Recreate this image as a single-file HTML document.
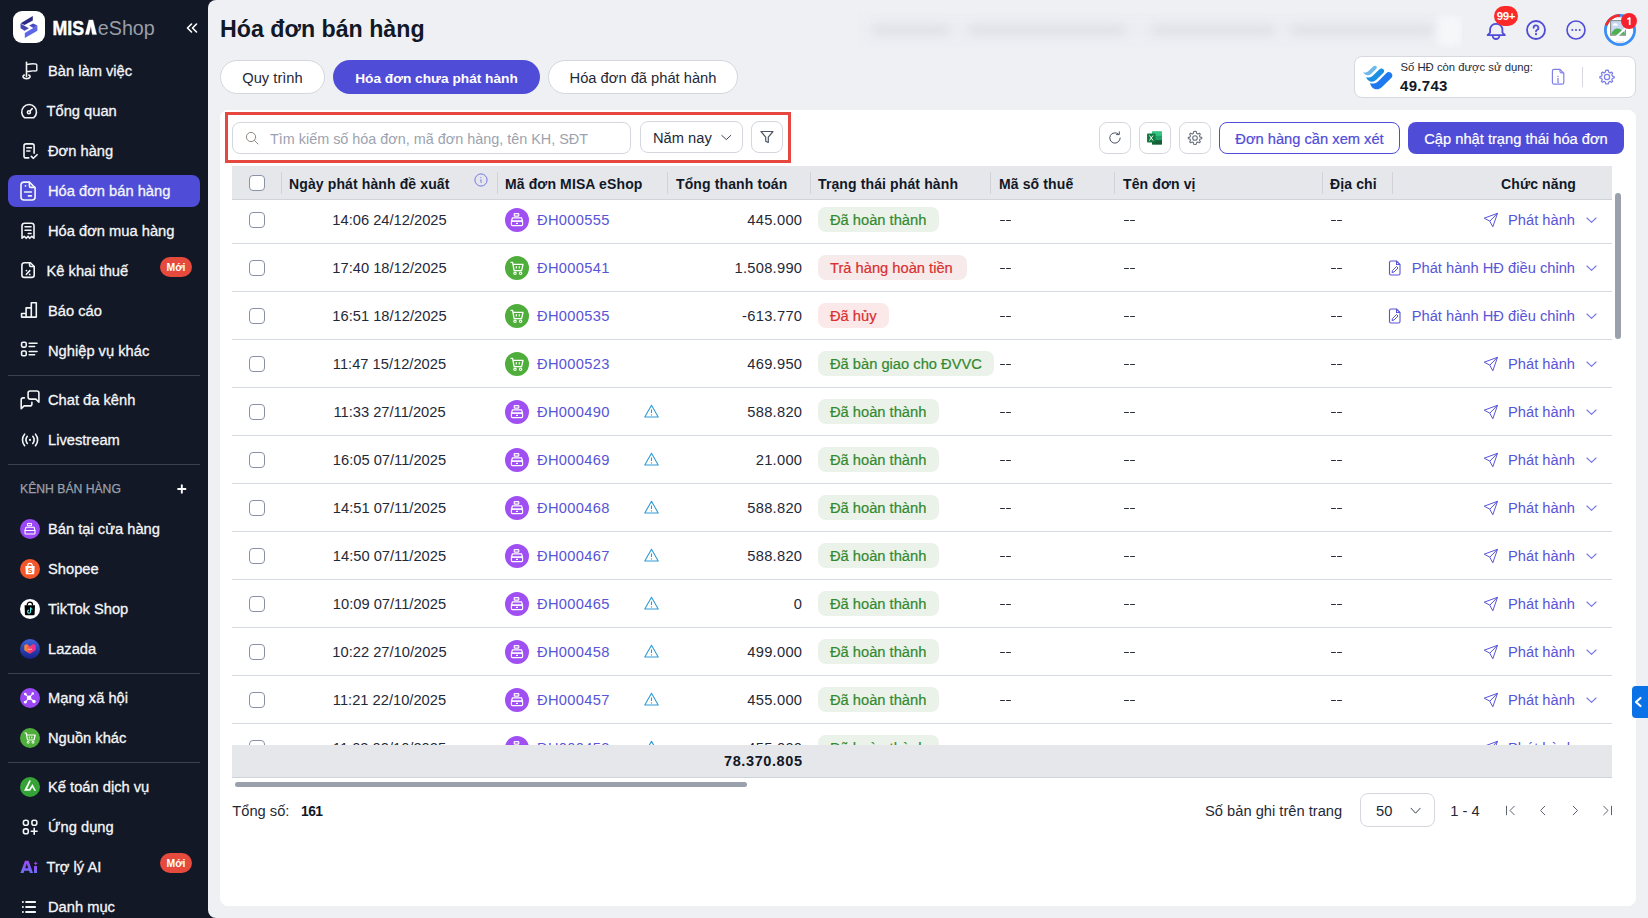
<!DOCTYPE html><html><head><meta charset="utf-8"><style>
*{box-sizing:border-box}
html,body{margin:0;padding:0;width:1648px;height:918px;overflow:hidden;background:#121826;font-family:"Liberation Sans", sans-serif;}
</style></head><body>
<div style="position:absolute;left:13px;top:11px;width:32px;height:32px;background:#fff;border-radius:9px"></div>
<svg style="position:absolute;left:13px;top:11px;" width="32" height="32" viewBox="0 0 32 32" fill="none"><path d="M7.7 12.2 L19.8 5 L19.8 9.4 L11.5 14 Z" fill="#2b2b85"/><path d="M7.5 12.6 L15.8 17.3 L11.6 19.7 L7.5 17.2 Z" fill="#4545b2"/><path d="M16.2 14.4 L20.2 12.5 L24.4 14.6 L20.3 17 Z" fill="#4a4ac2"/><path d="M11.8 22 L24.4 14.6 L24.4 19.8 L11.8 27 Z" fill="#5d66e8"/></svg>
<svg style="position:absolute;left:52px;top:12px;" width="110" height="30" viewBox="0 0 110 30" fill="none"><text x="0.6" y="22.6" font-family="Liberation Sans" font-weight="700" font-size="20.5" fill="#fff" stroke="#fff" stroke-width="0.5" textLength="31.5" lengthAdjust="spacingAndGlyphs">MIS</text><path d="M33.2 22.6 L36.9 7.9 H41 L44.6 22.6 H40.4 L39.9 20.4 L38.9 14 L36.9 22.6 Z" fill="#fff" stroke="#fff" stroke-width="0.3"/><text x="45.8" y="22.6" font-family="Liberation Sans" font-size="20.5" fill="#9a9ea8" textLength="57" lengthAdjust="spacingAndGlyphs">eShop</text></svg>
<svg style="position:absolute;left:186px;top:23px;" width="12" height="10" viewBox="0 0 12 10" fill="none"><path d="M5.5 1 L1.5 5 L5.5 9 M10.5 1 L6.5 5 L10.5 9" stroke="#fff" stroke-width="1.6" stroke-linecap="round" stroke-linejoin="round"/></svg>
<div style="position:absolute;left:8px;top:175px;width:192px;height:32px;background:#4f4cd8;border-radius:8px"></div>
<div style="position:absolute;left:8px;top:375px;width:192px;height:1px;background:#3a4150"></div>
<div style="position:absolute;left:8px;top:464px;width:192px;height:1px;background:#3a4150"></div>
<div style="position:absolute;left:8px;top:673px;width:192px;height:1px;background:#3a4150"></div>
<div style="position:absolute;left:8px;top:762px;width:192px;height:1px;background:#3a4150"></div>
<svg style="position:absolute;left:16px;top:60px;" width="26" height="22" viewBox="0 0 26 22" fill="none"><path d="M10.5 2.4 V16.6" stroke="#f4f5f7" stroke-width="1.6" stroke-linecap="round" stroke-linejoin="round"/><path d="M10.5 4.4 C13 4.6 15 3.6 17.5 3.7 C19.2 3.7 20.8 3.9 20.8 5 V10.2 C20.8 11 19.5 11 17.5 10.9 C15 10.8 13 11.7 10.5 11.5" stroke="#f4f5f7" stroke-width="1.4" stroke-linejoin="round"/><path d="M8.3 15 C6.2 15.8 6.6 18.7 10.55 18.7 C14.5 18.7 14.9 15.8 12.8 15" stroke="#f4f5f7" stroke-width="1.6" stroke-linecap="round" stroke-linejoin="round"/></svg>
<div style="position:absolute;left:48px;top:61.0px;line-height:20px;font-size:14.7px;color:#f4f5f7;font-weight:400;white-space:nowrap;-webkit-text-stroke:0.3px #f4f5f7">Bàn làm việc</div>
<svg style="position:absolute;left:16px;top:100px;" width="26" height="22" viewBox="0 0 26 22" fill="none"><path d="M8.6 17.8 A7.4 7.4 0 1 1 17.6 17.8 Z" stroke="#f4f5f7" stroke-width="1.6" stroke-linecap="round" stroke-linejoin="round"/><circle cx="12.9" cy="12.2" r="1.5" stroke="#f4f5f7" stroke-width="1.6" stroke-linecap="round" stroke-linejoin="round"/><path d="M14.3 10.7 L16.2 8.6" stroke="#f4f5f7" stroke-width="1.6" stroke-linecap="round" stroke-linejoin="round"/></svg>
<div style="position:absolute;left:46.5px;top:101.0px;line-height:20px;font-size:14.7px;color:#f4f5f7;font-weight:400;white-space:nowrap;-webkit-text-stroke:0.3px #f4f5f7">Tổng quan</div>
<svg style="position:absolute;left:16px;top:140px;" width="26" height="22" viewBox="0 0 26 22" fill="none"><path d="M12.7 17.9 H10 A2 2 0 0 1 8 15.9 V5.9 A2 2 0 0 1 10 3.9 H16.1 A2 2 0 0 1 18.1 5.9 V13.2" stroke="#f4f5f7" stroke-width="1.6" stroke-linecap="round" stroke-linejoin="round"/><path d="M10.8 7.7 H15.4 M10.8 11 H13.9" stroke="#f4f5f7" stroke-width="1.6" stroke-linecap="round" stroke-linejoin="round"/><path d="M15.3 16.3 L17.4 18.3 L21.1 14.7" stroke="#f4f5f7" stroke-width="1.6" stroke-linecap="round" stroke-linejoin="round"/></svg>
<div style="position:absolute;left:48px;top:141.0px;line-height:20px;font-size:14.7px;color:#f4f5f7;font-weight:400;white-space:nowrap;-webkit-text-stroke:0.3px #f4f5f7">Đơn hàng</div>
<svg style="position:absolute;left:16px;top:180px;" width="26" height="22" viewBox="0 0 26 22" fill="none"><path d="M13.4 2.1 H8 A3 3 0 0 0 5 5.1 V17 A3 3 0 0 0 8 20 H16.1 A3 3 0 0 0 19.1 17 V7.8 Z" stroke="#f4f5f7" stroke-width="1.6" stroke-linecap="round" stroke-linejoin="round"/><path d="M13.4 2.4 V5.9 A1.5 1.5 0 0 0 14.9 7.4 H18.8" stroke="#f4f5f7" stroke-width="1.6" stroke-linecap="round" stroke-linejoin="round"/><path d="M9.4 5.9 H9.6 M8.6 12 H15.4 M12.4 15.9 H15.4" stroke="#f4f5f7" stroke-width="1.6" stroke-linecap="round" stroke-linejoin="round"/></svg>
<div style="position:absolute;left:48px;top:181.0px;line-height:20px;font-size:14.7px;color:#f4f5f7;font-weight:400;white-space:nowrap;-webkit-text-stroke:0.3px #f4f5f7">Hóa đơn bán hàng</div>
<svg style="position:absolute;left:16px;top:220px;" width="26" height="22" viewBox="0 0 26 22" fill="none"><path d="M6 18.2 V5.7 A2.5 2.5 0 0 1 8.5 3.2 H15.5 A2.5 2.5 0 0 1 18 5.7 V18.2 L15.8 16.3 L13.8 18.3 L12 16.4 L10.2 18.3 L8.2 16.3 Z" stroke="#f4f5f7" stroke-width="1.6" stroke-linecap="round" stroke-linejoin="round"/><path d="M9 6.7 H15 M9 10.3 H15 M12.3 13.5 H15" stroke="#f4f5f7" stroke-width="1.6" stroke-linecap="round" stroke-linejoin="round"/></svg>
<div style="position:absolute;left:48px;top:221.0px;line-height:20px;font-size:14.7px;color:#f4f5f7;font-weight:400;white-space:nowrap;-webkit-text-stroke:0.3px #f4f5f7">Hóa đơn mua hàng</div>
<svg style="position:absolute;left:16px;top:260px;" width="26" height="22" viewBox="0 0 26 22" fill="none"><path d="M14.4 2.7 H8.4 A2.5 2.5 0 0 0 5.9 5.2 V14.9 A2.5 2.5 0 0 0 8.4 17.4 H15.7 A2.5 2.5 0 0 0 18.2 14.9 V6.5 Z" stroke="#f4f5f7" stroke-width="1.6" stroke-linecap="round" stroke-linejoin="round"/><path d="M13.6 3 V5.2 A1.3 1.3 0 0 0 14.9 6.5 H18" stroke="#f4f5f7" stroke-width="1.6" stroke-linecap="round" stroke-linejoin="round"/><path d="M10.4 14.3 L13.8 10.6" stroke="#f4f5f7" stroke-width="1.6" stroke-linecap="round" stroke-linejoin="round"/><circle cx="10.4" cy="10.6" r=".9" fill="#f4f5f7"/><circle cx="13.7" cy="14.4" r=".9" fill="#f4f5f7"/></svg>
<div style="position:absolute;left:46.5px;top:261.0px;line-height:20px;font-size:14.7px;color:#f4f5f7;font-weight:400;white-space:nowrap;-webkit-text-stroke:0.3px #f4f5f7">Kê khai thuế</div>
<svg style="position:absolute;left:16px;top:300px;" width="26" height="22" viewBox="0 0 26 22" fill="none"><path d="M5.6 17.1 V13.5 H10.1 V7.9 H15.3 V2.7 H20.3 V17.1 Z M10.1 13.5 V17.1 M15.3 7.9 V17.1" stroke="#f4f5f7" stroke-width="1.6" stroke-linecap="round" stroke-linejoin="round"/></svg>
<div style="position:absolute;left:48px;top:301.0px;line-height:20px;font-size:14.7px;color:#f4f5f7;font-weight:400;white-space:nowrap;-webkit-text-stroke:0.3px #f4f5f7">Báo cáo</div>
<svg style="position:absolute;left:16px;top:340px;" width="26" height="22" viewBox="0 0 26 22" fill="none"><rect x="5.6" y="2.2" width="4.6" height="4.9" rx="1.3" stroke="#f4f5f7" stroke-width="1.6" stroke-linecap="round" stroke-linejoin="round"/><rect x="5.6" y="11" width="4.6" height="4.8" rx="1.3" stroke="#f4f5f7" stroke-width="1.6" stroke-linecap="round" stroke-linejoin="round"/><path d="M13.2 3.2 H21 M13.2 6.5 H18.6 M13.2 11.5 H21 M13.2 14.7 H18.6" stroke="#f4f5f7" stroke-width="1.6" stroke-linecap="round" stroke-linejoin="round"/></svg>
<div style="position:absolute;left:48px;top:341.0px;line-height:20px;font-size:14.7px;color:#f4f5f7;font-weight:400;white-space:nowrap;-webkit-text-stroke:0.3px #f4f5f7">Nghiệp vụ khác</div>
<svg style="position:absolute;left:16px;top:389px;" width="26" height="22" viewBox="0 0 26 22" fill="none"><path d="M12.1 4 A2 2 0 0 1 14.1 2 H20.9 A2 2 0 0 1 22.9 4 V13.2 L19.9 10.1 H14.1 A2 2 0 0 1 12.1 8.1 Z" stroke="#f4f5f7" stroke-width="1.6" stroke-linecap="round" stroke-linejoin="round"/><path d="M8.4 8.9 H7.2 A2 2 0 0 0 5.2 10.9 V19.7 L8.1 16.9 H13.9 A2 2 0 0 0 15.9 14.9 V13.4" stroke="#f4f5f7" stroke-width="1.6" stroke-linecap="round" stroke-linejoin="round"/></svg>
<div style="position:absolute;left:48px;top:390.0px;line-height:20px;font-size:14.7px;color:#f4f5f7;font-weight:400;white-space:nowrap;-webkit-text-stroke:0.3px #f4f5f7">Chat đa kênh</div>
<svg style="position:absolute;left:16px;top:429px;" width="26" height="22" viewBox="0 0 26 22" fill="none"><path d="M11.3 7.3 C9.8 9.3 9.8 12.5 11.3 14.5 M16.8 7.3 C18.3 9.3 18.3 12.5 16.8 14.5 M8.6 5.2 C5.8 8.3 5.8 13.5 8.6 16.6 M19.5 5.2 C22.3 8.3 22.3 13.5 19.5 16.6" stroke="#f4f5f7" stroke-width="1.6" stroke-linecap="round" stroke-linejoin="round"/><circle cx="14" cy="10.9" r="1.1" fill="#f4f5f7"/></svg>
<div style="position:absolute;left:48px;top:430.0px;line-height:20px;font-size:14.7px;color:#f4f5f7;font-weight:400;white-space:nowrap;-webkit-text-stroke:0.3px #f4f5f7">Livestream</div>
<svg style="position:absolute;left:20px;top:519px;" width="20" height="20" viewBox="0 0 20 20" fill="none"><circle cx="10" cy="10" r="10" fill="#9a48f5"/><rect x="7.5" y="4.5" width="4" height="2.3" rx=".6" stroke="#fff" stroke-width="1.1"/><path d="M6 8.2 H14 L15 11.5 H5 Z" stroke="#fff" stroke-width="1.1" stroke-linejoin="round"/><rect x="5" y="11.5" width="10" height="3.5" rx=".8" stroke="#fff" stroke-width="1.1"/></svg>
<div style="position:absolute;left:48px;top:519.0px;line-height:20px;font-size:14.7px;color:#f4f5f7;font-weight:400;white-space:nowrap;-webkit-text-stroke:0.3px #f4f5f7">Bán tại cửa hàng</div>
<svg style="position:absolute;left:20px;top:559px;" width="20" height="20" viewBox="0 0 20 20" fill="none"><circle cx="10" cy="10" r="10" fill="#f3562a"/><path d="M5.3 7 H14.7 L14.2 15.3 H5.8 Z" fill="#fff"/><path d="M7.7 7 A2.3 2.6 0 0 1 12.3 7" stroke="#fff" stroke-width="1.1"/><text x="10" y="14" font-size="7" font-weight="700" text-anchor="middle" fill="#f3562a" font-family="Liberation Sans">S</text></svg>
<div style="position:absolute;left:48px;top:559.0px;line-height:20px;font-size:14.7px;color:#f4f5f7;font-weight:400;white-space:nowrap;-webkit-text-stroke:0.3px #f4f5f7">Shopee</div>
<svg style="position:absolute;left:20px;top:599px;" width="20" height="20" viewBox="0 0 20 20" fill="none"><circle cx="10" cy="10" r="10" fill="#fff"/><path d="M4.6 6.2 H15 L14.6 15.2 Q14.5 16.2 13.5 16.2 H6 Q5 16.2 4.9 15.2 Z" fill="#000"/><path d="M7.3 6.4 V5.6 A2.6 2.4 0 0 1 12.5 5.6 V6.4" stroke="#000" stroke-width="1.3"/><path d="M10.6 8.6 V12.6 A1.5 1.5 0 1 1 9 11.2" stroke="#5ee8e6" stroke-width="1.2"/><path d="M10.6 8.6 C10.8 9.6 11.5 10.2 12.5 10.3" stroke="#5ee8e6" stroke-width="1.1"/></svg>
<div style="position:absolute;left:48px;top:599.0px;line-height:20px;font-size:14.7px;color:#f4f5f7;font-weight:400;white-space:nowrap;-webkit-text-stroke:0.3px #f4f5f7">TikTok Shop</div>
<svg style="position:absolute;left:20px;top:639px;" width="20" height="20" viewBox="0 0 20 20" fill="none"><defs><linearGradient id="lz" x1="0" y1="0" x2="0" y2="1"><stop offset="0" stop-color="#3f62d8"/><stop offset="1" stop-color="#17238a"/></linearGradient><linearGradient id="lz2" x1="0" y1="0" x2="1" y2="0"><stop offset="0" stop-color="#ff9a1f"/><stop offset=".5" stop-color="#f43d6b"/><stop offset="1" stop-color="#e62aa5"/></linearGradient></defs><circle cx="10" cy="10" r="10" fill="url(#lz)"/><path d="M4.4 6.3 L7 5 L9.9 7.6 L12.8 5 L15.8 6.3 V11 L9.9 14.8 L4.4 11.3 Z" fill="url(#lz2)"/><path d="M8 10.3 H12" stroke="#ffd9c0" stroke-width=".9" opacity=".8"/></svg>
<div style="position:absolute;left:48px;top:639.0px;line-height:20px;font-size:14.7px;color:#f4f5f7;font-weight:400;white-space:nowrap;-webkit-text-stroke:0.3px #f4f5f7">Lazada</div>
<svg style="position:absolute;left:20px;top:688px;" width="20" height="20" viewBox="0 0 20 20" fill="none"><circle cx="10" cy="10" r="10" fill="#9a48f5"/><path d="M9.1 9.8 L5.3 6.1 M9.1 9.8 L12.8 5.5 M9.1 9.8 L14 13.5 M9.1 9.8 L5.3 14.2" stroke="#fff" stroke-width="1.1"/><circle cx="9.1" cy="9.8" r="2.3" fill="#fff"/><circle cx="5.3" cy="6.1" r="1.3" fill="#fff"/><circle cx="12.8" cy="5.5" r="1.2" fill="#fff"/><circle cx="14" cy="13.5" r="1.7" fill="#fff"/><circle cx="5.3" cy="14.2" r="1.4" fill="#fff"/></svg>
<div style="position:absolute;left:48px;top:688.0px;line-height:20px;font-size:14.7px;color:#f4f5f7;font-weight:400;white-space:nowrap;-webkit-text-stroke:0.3px #f4f5f7">Mạng xã hội</div>
<svg style="position:absolute;left:20px;top:728px;" width="20" height="20" viewBox="0 0 20 20" fill="none"><circle cx="10" cy="10" r="10" fill="#4fae3b"/><path d="M4.5 5 H6.2 L7.5 12 H14 L15.2 7 H6.7" stroke="#fff" stroke-width="1.2" stroke-linejoin="round"/><path d="M9.3 8.5 V10.5 M11.8 8.5 V10.5" stroke="#fff" stroke-width="1"/><circle cx="8.2" cy="14.3" r="1" stroke="#fff" stroke-width="1"/><circle cx="13" cy="14.3" r="1" stroke="#fff" stroke-width="1"/></svg>
<div style="position:absolute;left:48px;top:728.0px;line-height:20px;font-size:14.7px;color:#f4f5f7;font-weight:400;white-space:nowrap;-webkit-text-stroke:0.3px #f4f5f7">Nguồn khác</div>
<svg style="position:absolute;left:20px;top:777px;" width="20" height="20" viewBox="0 0 20 20" fill="none"><circle cx="10" cy="10" r="10" fill="#35a336"/><path d="M4 13.8 L9.4 3.3 L10.9 3.7 L7.1 11.9 H9.3 L12.4 7.1 L16 13.8 H14.3 L12.3 10.3 L10.2 13.8 Z" fill="#fff"/></svg>
<div style="position:absolute;left:48px;top:777.0px;line-height:20px;font-size:14.7px;color:#f4f5f7;font-weight:400;white-space:nowrap;-webkit-text-stroke:0.3px #f4f5f7">Kế toán dịch vụ</div>
<svg style="position:absolute;left:16px;top:816px;" width="26" height="22" viewBox="0 0 26 22" fill="none"><rect x="7.4" y="4.3" width="4.9" height="4.9" rx="2" stroke="#f4f5f7" stroke-width="1.6" stroke-linecap="round" stroke-linejoin="round"/><rect x="15.9" y="4.3" width="4.9" height="4.9" rx="2" stroke="#f4f5f7" stroke-width="1.6" stroke-linecap="round" stroke-linejoin="round"/><rect x="7.4" y="12.9" width="4.9" height="4.9" rx="2" stroke="#f4f5f7" stroke-width="1.6" stroke-linecap="round" stroke-linejoin="round"/><path d="M18.2 12.4 V18.3 M15.3 15.3 H21.1" stroke="#f4f5f7" stroke-width="1.6" stroke-linecap="round" stroke-linejoin="round"/></svg>
<div style="position:absolute;left:48px;top:817.0px;line-height:20px;font-size:14.7px;color:#f4f5f7;font-weight:400;white-space:nowrap;-webkit-text-stroke:0.3px #f4f5f7">Ứng dụng</div>
<svg style="position:absolute;left:16px;top:855px;" width="26" height="22" viewBox="0 0 26 22" fill="none"><defs><linearGradient id="aig" x1="0" y1="0" x2="0" y2="1"><stop offset="0" stop-color="#a046f8"/><stop offset="1" stop-color="#6b72f5"/></linearGradient></defs><path fill-rule="evenodd" d="M4.4 18 L9 5.75 H12.6 L17 18 H13.9 L13.1 15.7 H8.4 L7.6 18 Z M9.2 13.2 H12.3 L10.75 8.7 Z" fill="url(#aig)"/><rect x="18" y="11" width="3" height="7" fill="url(#aig)"/><path d="M19.7 6.2 Q20 8.1 21.9 8.3 Q20 8.5 19.7 10.4 Q19.4 8.5 17.5 8.3 Q19.4 8.1 19.7 6.2 Z" fill="#a046f8"/></svg>
<div style="position:absolute;left:46.5px;top:857.0px;line-height:20px;font-size:14.7px;color:#f4f5f7;font-weight:400;white-space:nowrap;-webkit-text-stroke:0.3px #f4f5f7">Trợ lý AI</div>
<svg style="position:absolute;left:16px;top:896px;" width="26" height="22" viewBox="0 0 26 22" fill="none"><path d="M6.9 6 H6.9 M6.9 11 H6.9 M6.9 16 H6.9" stroke="#f4f5f7" stroke-width="2" stroke-linecap="round"/><path d="M10.1 6 H19.1 M10.1 11 H19.1 M10.1 16 H19.1" stroke="#f4f5f7" stroke-width="2" stroke-linecap="round"/></svg>
<div style="position:absolute;left:48px;top:897.0px;line-height:20px;font-size:14.7px;color:#f4f5f7;font-weight:400;white-space:nowrap;-webkit-text-stroke:0.3px #f4f5f7">Danh mục</div>
<div style="position:absolute;left:20px;top:478.5px;line-height:20px;font-size:12.2px;color:#9ca0aa;font-weight:400;white-space:nowrap;-webkit-text-stroke:0.25px #9ca0aa">KÊNH BÁN HÀNG</div>
<svg style="position:absolute;left:175px;top:482px;" width="13" height="13" viewBox="0 0 13 13" fill="none"><path d="M6.8 2.6 V11.4 M2.4 7 H11.2" stroke="#fff" stroke-width="1.9" stroke-linecap="butt"/></svg>
<div style="position:absolute;left:160px;top:257px;width:32px;height:20px;border-radius:10px;background:#e54a3c;color:#fff;font-size:10.4px;font-weight:700;line-height:21px;text-align:center">Mới</div>
<div style="position:absolute;left:160px;top:853px;width:32px;height:20px;border-radius:10px;background:#e54a3c;color:#fff;font-size:10.4px;font-weight:700;line-height:21px;text-align:center">Mới</div>
<div style="position:absolute;left:208px;top:0px;width:1440px;height:918px;background:#eef0f4;border-radius:8px 0 0 8px"></div>
<div style="position:absolute;left:220px;top:14.0px;line-height:30px;font-size:23.2px;color:#111827;font-weight:700;white-space:nowrap;">Hóa đơn bán hàng</div>
<div style="position:absolute;left:220px;top:60px;width:105px;height:34px;border-radius:17px;background:#fff;border:1px solid #d4d7de;color:#1f2937;font-size:14.7px;line-height:35px;text-align:center;white-space:nowrap">Quy trình</div>
<div style="position:absolute;left:333px;top:60px;width:207px;height:34px;border-radius:17px;background:#4f4cd8;color:#fff;font-weight:700;font-size:13.7px;line-height:37px;text-align:center;white-space:nowrap">Hóa đơn chưa phát hành</div>
<div style="position:absolute;left:548px;top:60px;width:190px;height:34px;border-radius:17px;background:#fff;border:1px solid #d4d7de;color:#1f2937;font-size:14.7px;line-height:35px;text-align:center;white-space:nowrap">Hóa đơn đã phát hành</div>
<div style="position:absolute;left:858px;top:12px;width:604px;height:36px;overflow:hidden;"><div style="position:absolute;left:0;top:0;width:604px;height:36px;background:#eceef2;filter:blur(6px)"></div><div style="position:absolute;left:14px;top:13px;width:78px;height:10px;background:#dfe1e5;filter:blur(5px);border-radius:6px"></div><div style="position:absolute;left:110px;top:13px;width:158px;height:10px;background:#dfe1e5;filter:blur(5px);border-radius:6px"></div><div style="position:absolute;left:293px;top:13px;width:124px;height:10px;background:#dfe1e5;filter:blur(5px);border-radius:6px"></div><div style="position:absolute;left:432px;top:13px;width:144px;height:10px;background:#dfe1e5;filter:blur(5px);border-radius:6px"></div><div style="position:absolute;left:580px;top:4px;width:24px;height:30px;background:#f6f7f9;filter:blur(4px)"></div></div>
<svg style="position:absolute;left:1485px;top:19px;" width="22" height="22" viewBox="0 0 22 22" fill="none"><path d="M2.6 16.1 H19.9 L17.4 13.6 V9.8 A6.3 6.3 0 0 0 5.1 9.8 V13.6 Z" stroke="#4f4cd8" stroke-width="1.8" stroke-linejoin="round"/><path d="M7.6 16.6 A3.4 3.4 0 0 0 14.4 16.6" stroke="#4f4cd8" stroke-width="1.8"/></svg>
<div style="position:absolute;left:1494px;top:6px;width:24px;height:20px;border-radius:10px;background:#fd2a2a;color:#fff;font-size:11.5px;font-weight:700;line-height:20px;text-align:center;letter-spacing:-0.4px">99+</div>
<svg style="position:absolute;left:1526px;top:20px;" width="20" height="20" viewBox="0 0 20 20" fill="none"><circle cx="10" cy="10" r="9" stroke="#4f4cd8" stroke-width="1.8"/><path d="M7.6 7.8 A2.4 2.4 0 1 1 10.8 10 C10.2 10.3 10 10.7 10 11.4" stroke="#4f4cd8" stroke-width="1.8" stroke-linecap="round"/><circle cx="10" cy="14.2" r="1.1" fill="#4f4cd8"/></svg>
<svg style="position:absolute;left:1566px;top:20px;" width="20" height="20" viewBox="0 0 20 20" fill="none"><circle cx="10" cy="10" r="9" stroke="#4f4cd8" stroke-width="1.6"/><circle cx="6.3" cy="10" r="1" fill="#4f4cd8"/><circle cx="10" cy="10" r="1" fill="#4f4cd8"/><circle cx="13.7" cy="10" r="1" fill="#4f4cd8"/></svg>
<svg style="position:absolute;left:1604px;top:14px;" width="32" height="32" viewBox="0 0 32 32" fill="none"><circle cx="16" cy="16" r="14.6" stroke="#3b8ef5" stroke-width="2.8" fill="#fff"/><path d="M2.17 11.3 A14.6 14.6 0 0 1 16 1.4" stroke="#f52a2a" stroke-width="2.8"/><path d="M12 4.2 A11.8 11.8 0 0 1 20 4.2 M12 27.6 A11.8 11.8 0 0 0 20 27.6" stroke="#c9c9c9" stroke-width="0.8"/><rect x="6.6" y="6.6" width="14.8" height="14.6" fill="#c9d8f2" stroke="#8c8c8c" stroke-width="1.1"/><path d="M8.6 11.6 C9 10.1 10 9.3 11.3 9.3 C12.6 9.3 13.5 10.1 14 11.6 Z" fill="#fff"/><path d="M7.2 20.7 C8.5 16.3 11 14.6 13.6 14.6 C16 14.6 18.5 16.3 20.9 19.3 V20.7 Z" fill="#4caf50"/><path d="M12.3 22.8 L23 13" stroke="#fff" stroke-width="1.9"/></svg>
<div style="position:absolute;left:1621px;top:13px;width:16px;height:16px;border-radius:8px;background:#f5222d"></div>
<svg style="position:absolute;left:1621px;top:13px;" width="16" height="16" viewBox="0 0 16 16" fill="none"><path d="M6.3 6.4 L8.7 4.9 V12" stroke="#fff" stroke-width="1.7" stroke-linejoin="round"/></svg>
<div style="position:absolute;left:1354px;top:56px;width:282px;height:42px;background:#fff;border:1px solid #d6d9df;border-radius:8px"></div>
<svg style="position:absolute;left:1360px;top:60px;" width="36" height="32" viewBox="0 0 36 32" fill="none"><path d="M3 12.2 C5 13 7 12.5 9 10.5 L13.5 6.3 C15.5 4.6 18 6.8 16.3 8.8 L11 14 C8.5 16.2 5 15.5 3 12.2 Z" fill="#6fb8ea"/><path d="M6 17.2 C8.5 18 11 17.5 13 15.5 L19.5 9.2 C22 7 25.8 10.2 23.5 12.8 L16.3 19.8 C13 23 8 22 6 17.2 Z" fill="#1a8fe3"/><path d="M10 23.2 C13 24 16 23.5 18.5 21 L26.5 13 C29.5 10 34.5 14.5 31.5 17.8 L22 27 C18 31 12 30 10 23.2 Z" fill="#1e78f0"/></svg>
<div style="position:absolute;left:1400.5px;top:58.5px;line-height:16px;font-size:11.3px;color:#1f2937;font-weight:400;white-space:nowrap;">Số HĐ còn được sử dụng:</div>
<div style="position:absolute;left:1400px;top:77.0px;line-height:18px;font-size:15px;color:#111827;font-weight:700;white-space:nowrap;letter-spacing:0.3px">49.743</div>
<svg style="position:absolute;left:1550px;top:68px;" width="16" height="18" viewBox="0 0 16 18" fill="none"><path d="M10 1.4 H4.2 A1.8 1.8 0 0 0 2.4 3.2 V14.4 A1.8 1.8 0 0 0 4.2 16.2 H12 A1.8 1.8 0 0 0 13.8 14.4 V5.2 Z" stroke="#7f81e8" stroke-width="1.2" stroke-linejoin="round"/><path d="M10 1.6 V3.6 A1.2 1.2 0 0 0 11.2 4.8 H13.6" stroke="#7f81e8" stroke-width="1.2"/><path d="M7.3 10.6 H8 V14.3 H8.8" stroke="#7f81e8" stroke-width="1.2"/><circle cx="7.9" cy="8.4" r=".7" fill="#7f81e8"/></svg>
<div style="position:absolute;left:1582px;top:67px;width:1px;height:20px;background:#d6d9df"></div>
<svg style="position:absolute;left:1598px;top:68px;" width="18" height="18" viewBox="0 0 18 18" fill="none"><path d="M9 1.5 L10.6 1.8 L11 3.9 L12.5 4.7 L14.4 3.8 L15.5 5 L14.6 6.9 L15.2 8.5 L17.3 9 L17.3 10.6 L15.2 11.1 L14.6 12.6 L15.5 14.4 L14.3 15.6 L12.5 14.6 L11 15.3 L10.6 17.4 L9 17.5 L7.4 17.4 L7 15.3 L5.5 14.6 L3.7 15.6 L2.5 14.4 L3.4 12.6 L2.8 11.1 L0.7 10.6 L0.7 9 L2.8 8.5 L3.4 6.9 L2.5 5 L3.6 3.8 L5.5 4.7 L7 3.9 L7.4 1.8 Z" transform="translate(9 9) scale(0.86) translate(-9 -9.5)" stroke="#7f81e8" stroke-width="1.45" stroke-linejoin="round"/><circle cx="9" cy="9" r="2.6" stroke="#7f81e8" stroke-width="1.25"/></svg>
<div style="position:absolute;left:220px;top:110px;width:1416px;height:796px;background:#fff;border-radius:8px"></div>
<div style="position:absolute;left:232px;top:122px;width:399px;height:32px;border:1px solid #d4d7de;border-radius:8px;background:#fff"></div>
<svg style="position:absolute;left:245px;top:131px;" width="15" height="15" viewBox="0 0 15 15" fill="none"><circle cx="6" cy="6" r="4.6" stroke="#8e8a82" stroke-width="1"/><path d="M9.4 9.4 L13 13" stroke="#8e8a82" stroke-width="1" stroke-linecap="round"/></svg>
<div style="position:absolute;left:270px;top:128.5px;line-height:20px;font-size:14.4px;color:#9ca3af;font-weight:400;white-space:nowrap;">Tìm kiếm số hóa đơn, mã đơn hàng, tên KH, SĐT</div>
<div style="position:absolute;left:640px;top:121px;width:103px;height:32px;border:1px solid #d4d7de;border-radius:8px;background:#fff"></div>
<div style="position:absolute;left:653px;top:127.5px;line-height:20px;font-size:14.7px;color:#1f2937;font-weight:400;white-space:nowrap;">Năm nay</div>
<svg style="position:absolute;left:720px;top:132px;" width="12" height="10" viewBox="0 0 12 10" fill="none"><path d="M1.8 3.4 L6.3 7.6 L10.8 3.4" stroke="#3b4250" stroke-width="1" stroke-linecap="round" stroke-linejoin="round"/></svg>
<div style="position:absolute;left:751px;top:121px;width:32px;height:32px;border:1px solid #d4d7de;border-radius:8px;background:#fff"></div>
<svg style="position:absolute;left:759px;top:129px;" width="16" height="16" viewBox="0 0 16 16" fill="none"><path d="M2 2.5 H14 L9.3 8.2 V13.5 L6.7 12.2 V8.2 Z" stroke="#4b5563" stroke-width="1.2" stroke-linejoin="round"/></svg>
<div style="position:absolute;left:225px;top:112px;width:566px;height:51px;border:3px solid #e6473e"></div>
<div style="position:absolute;left:1099px;top:122px;width:32px;height:32px;border:1px solid #d4d7de;border-radius:8px;background:#fff"></div>
<svg style="position:absolute;left:1107px;top:130px;" width="16" height="16" viewBox="0 0 16 16" fill="none"><path d="M13.2 8 A5.2 5.2 0 1 1 11.5 4.1" stroke="#4b5263" stroke-width="1" stroke-linecap="round"/><path d="M12.3 1.8 V4.6 H9.5" stroke="#4b5263" stroke-width="1" stroke-linecap="round" stroke-linejoin="round"/></svg>
<div style="position:absolute;left:1139px;top:122px;width:32px;height:32px;border:1px solid #d4d7de;border-radius:8px;background:#fff"></div>
<svg style="position:absolute;left:1146px;top:130px;" width="17" height="16" viewBox="0 0 17 16" fill="none"><rect x="6" y="1.5" width="10" height="13" rx="1" fill="#21a366"/><rect x="6" y="1.5" width="10" height="4.3" fill="#33c481"/><rect x="6" y="10.2" width="10" height="4.3" fill="#185c37"/><rect x="1" y="3.5" width="8.5" height="9" rx="1" fill="#107c41"/><path d="M3.5 5.5 L7 10.5 M7 5.5 L3.5 10.5" stroke="#fff" stroke-width="1"/></svg>
<div style="position:absolute;left:1179px;top:122px;width:32px;height:32px;border:1px solid #d4d7de;border-radius:8px;background:#fff"></div>
<svg style="position:absolute;left:1187px;top:130px;" width="16" height="16" viewBox="0 0 16 16" fill="none"><path d="M8 1.3 L9.3 1.6 L9.6 3.3 L10.8 4 L12.4 3.2 L13.3 4.2 L12.5 5.8 L13 7.1 L14.7 7.4 L14.7 8.7 L13 9 L12.5 10.2 L13.3 11.8 L12.3 12.8 L10.8 12 L9.6 12.6 L9.3 14.3 L8 14.5 L6.7 14.3 L6.4 12.6 L5.2 12 L3.7 12.8 L2.7 11.8 L3.5 10.2 L3 9 L1.3 8.7 L1.3 7.4 L3 7.1 L3.5 5.8 L2.7 4.2 L3.6 3.2 L5.2 4 L6.4 3.3 L6.7 1.6 Z" stroke="#6b7280" stroke-width="1.1" stroke-linejoin="round"/><circle cx="8" cy="8" r="2.3" stroke="#6b7280" stroke-width="1.1"/></svg>
<div style="position:absolute;left:1219px;top:122px;width:181px;height:32px;border:1px solid #4f4cd8;border-radius:8px;background:#fff;color:#4f4cd8;font-size:14.7px;line-height:32px;text-align:center;white-space:nowrap;-webkit-text-stroke:0.2px #4f4cd8">Đơn hàng cần xem xét</div>
<div style="position:absolute;left:1408px;top:122px;width:216px;height:32px;border-radius:8px;background:#4f4cd8;color:#fff;font-size:14.7px;line-height:34px;text-align:center;white-space:nowrap;-webkit-text-stroke:0.2px #fff">Cập nhật trạng thái hóa đơn</div>
<div style="position:absolute;left:232px;top:166px;width:1380px;height:579px;overflow:hidden">
<div style="position:absolute;left:0px;top:77px;width:1380px;height:1px;background:#d5d9e0"></div>
<div style="position:absolute;left:17px;top:46px;width:16px;height:16px;border:1.2px solid #8a93a6;border-radius:4px;background:#fff"></div>
<div style="position:absolute;left:-42.5px;width:400px;text-align:center;top:44.0px;line-height:20px;font-size:14.7px;color:#1f2937;font-weight:400;white-space:nowrap;">14:06 24/12/2025</div>
<svg style="position:absolute;left:273px;top:42px" width="24" height="24" viewBox="0 0 24 24" fill="none"><circle cx="12" cy="12" r="12" fill="#a04ff2"/><rect x="9.2" y="5.6" width="4.6" height="2.6" rx=".7" stroke="#fff" stroke-width="1.2"/><path d="M7.5 9.8 H16.5 L17.6 13.2 H6.4 Z" stroke="#fff" stroke-width="1.2" stroke-linejoin="round"/><rect x="6.4" y="13.2" width="11.2" height="4.4" rx="1" stroke="#fff" stroke-width="1.2"/><path d="M11 15.4 H13" stroke="#fff" stroke-width="1.2"/></svg>
<div style="position:absolute;left:305px;top:44.0px;line-height:20px;font-size:14.7px;color:#5855d6;font-weight:400;white-space:nowrap;letter-spacing:0.3px">ĐH000555</div>
<div style="position:absolute;right:809.7px;top:44.0px;line-height:20px;font-size:14.7px;color:#1f2937;font-weight:400;white-space:nowrap;letter-spacing:0.28px">445.000</div>
<div style="position:absolute;left:586px;top:41px;width:121px;height:25px;border-radius:8px;background:#eaf2ea;color:#34892f;font-size:14.7px;line-height:26px;padding-left:12px;white-space:nowrap;-webkit-text-stroke:0.2px #34892f">Đã hoàn thành</div>
<div style="position:absolute;left:767.8px;top:54px;width:5px;height:1.2px;background:#272d3a;border-radius:0.6px"></div>
<div style="position:absolute;left:774.1999999999999px;top:54px;width:5px;height:1.2px;background:#272d3a;border-radius:0.6px"></div>
<div style="position:absolute;left:891.8px;top:54px;width:5px;height:1.2px;background:#272d3a;border-radius:0.6px"></div>
<div style="position:absolute;left:898.2px;top:54px;width:5px;height:1.2px;background:#272d3a;border-radius:0.6px"></div>
<div style="position:absolute;left:1098.8px;top:54px;width:5px;height:1.2px;background:#272d3a;border-radius:0.6px"></div>
<div style="position:absolute;left:1105.2px;top:54px;width:5px;height:1.2px;background:#272d3a;border-radius:0.6px"></div>
<svg style="position:absolute;left:1251px;top:46px" width="16" height="16" viewBox="0 0 16 16" fill="none"><path d="M14.5 1.3 L1.2 6.2 L6.8 9.2 L9.8 14.8 Z M14.5 1.3 L6.8 9.2" stroke="#5855d6" stroke-width="1" stroke-linejoin="round"/></svg>
<div style="position:absolute;right:37px;top:44.0px;line-height:20px;font-size:14.7px;color:#5855d6;font-weight:400;white-space:nowrap;">Phát hành</div>
<svg style="position:absolute;left:1354px;top:49px" width="11" height="10" viewBox="0 0 11 10" fill="none"><path d="M1 3 L5.5 7.3 L10 3" stroke="#7674e6" stroke-width="1.1" stroke-linecap="round" stroke-linejoin="round"/></svg>
<div style="position:absolute;left:0px;top:125px;width:1380px;height:1px;background:#d5d9e0"></div>
<div style="position:absolute;left:17px;top:94px;width:16px;height:16px;border:1.2px solid #8a93a6;border-radius:4px;background:#fff"></div>
<div style="position:absolute;left:-42.5px;width:400px;text-align:center;top:92.0px;line-height:20px;font-size:14.7px;color:#1f2937;font-weight:400;white-space:nowrap;">17:40 18/12/2025</div>
<svg style="position:absolute;left:273px;top:90px" width="24" height="24" viewBox="0 0 24 24" fill="none"><circle cx="12" cy="12" r="12" fill="#4fae3b"/><path d="M5.5 6.3 H7.6 L9.1 14.6 H16.6 L18 8.4 H8.2" stroke="#fff" stroke-width="1.3" stroke-linejoin="round"/><path d="M11.3 10.2 V12.6 M14.3 10.2 V12.6" stroke="#fff" stroke-width="1.2"/><circle cx="10" cy="17.3" r="1.2" stroke="#fff" stroke-width="1.1"/><circle cx="15.6" cy="17.3" r="1.2" stroke="#fff" stroke-width="1.1"/></svg>
<div style="position:absolute;left:305px;top:92.0px;line-height:20px;font-size:14.7px;color:#5855d6;font-weight:400;white-space:nowrap;letter-spacing:0.3px">ĐH000541</div>
<div style="position:absolute;right:809.7px;top:92.0px;line-height:20px;font-size:14.7px;color:#1f2937;font-weight:400;white-space:nowrap;letter-spacing:0.28px">1.508.990</div>
<div style="position:absolute;left:586px;top:89px;width:149px;height:25px;border-radius:8px;background:#f6ebea;color:#d93030;font-size:14.7px;line-height:26px;padding-left:12px;white-space:nowrap;-webkit-text-stroke:0.2px #d93030">Trả hàng hoàn tiền</div>
<div style="position:absolute;left:767.8px;top:102px;width:5px;height:1.2px;background:#272d3a;border-radius:0.6px"></div>
<div style="position:absolute;left:774.1999999999999px;top:102px;width:5px;height:1.2px;background:#272d3a;border-radius:0.6px"></div>
<div style="position:absolute;left:891.8px;top:102px;width:5px;height:1.2px;background:#272d3a;border-radius:0.6px"></div>
<div style="position:absolute;left:898.2px;top:102px;width:5px;height:1.2px;background:#272d3a;border-radius:0.6px"></div>
<div style="position:absolute;left:1098.8px;top:102px;width:5px;height:1.2px;background:#272d3a;border-radius:0.6px"></div>
<div style="position:absolute;left:1105.2px;top:102px;width:5px;height:1.2px;background:#272d3a;border-radius:0.6px"></div>
<svg style="position:absolute;left:1156px;top:94px" width="14" height="16" viewBox="0 0 14 16" fill="none"><path d="M8.5 1 H3 A1.5 1.5 0 0 0 1.5 2.5 V13.5 A1.5 1.5 0 0 0 3 15 H10.5 A1.5 1.5 0 0 0 12 13.5 V4.5 Z M8.5 1 V4.5 H12" stroke="#5855d6" stroke-width="1.1" stroke-linejoin="round"/><path d="M4 12.5 L4.5 10.5 L8.5 6.5 L10 8 L6 12 Z" stroke="#5855d6" stroke-width="1" stroke-linejoin="round"/></svg>
<div style="position:absolute;right:37px;top:92.0px;line-height:20px;font-size:14.7px;color:#5855d6;font-weight:400;white-space:nowrap;">Phát hành HĐ điều chỉnh</div>
<svg style="position:absolute;left:1354px;top:97px" width="11" height="10" viewBox="0 0 11 10" fill="none"><path d="M1 3 L5.5 7.3 L10 3" stroke="#7674e6" stroke-width="1.1" stroke-linecap="round" stroke-linejoin="round"/></svg>
<div style="position:absolute;left:0px;top:173px;width:1380px;height:1px;background:#d5d9e0"></div>
<div style="position:absolute;left:17px;top:142px;width:16px;height:16px;border:1.2px solid #8a93a6;border-radius:4px;background:#fff"></div>
<div style="position:absolute;left:-42.5px;width:400px;text-align:center;top:140.0px;line-height:20px;font-size:14.7px;color:#1f2937;font-weight:400;white-space:nowrap;">16:51 18/12/2025</div>
<svg style="position:absolute;left:273px;top:138px" width="24" height="24" viewBox="0 0 24 24" fill="none"><circle cx="12" cy="12" r="12" fill="#4fae3b"/><path d="M5.5 6.3 H7.6 L9.1 14.6 H16.6 L18 8.4 H8.2" stroke="#fff" stroke-width="1.3" stroke-linejoin="round"/><path d="M11.3 10.2 V12.6 M14.3 10.2 V12.6" stroke="#fff" stroke-width="1.2"/><circle cx="10" cy="17.3" r="1.2" stroke="#fff" stroke-width="1.1"/><circle cx="15.6" cy="17.3" r="1.2" stroke="#fff" stroke-width="1.1"/></svg>
<div style="position:absolute;left:305px;top:140.0px;line-height:20px;font-size:14.7px;color:#5855d6;font-weight:400;white-space:nowrap;letter-spacing:0.3px">ĐH000535</div>
<div style="position:absolute;right:809.7px;top:140.0px;line-height:20px;font-size:14.7px;color:#1f2937;font-weight:400;white-space:nowrap;letter-spacing:0.28px">-613.770</div>
<div style="position:absolute;left:586px;top:137px;width:71px;height:25px;border-radius:8px;background:#fbe8e8;color:#d93030;font-size:14.7px;line-height:26px;padding-left:12px;white-space:nowrap;-webkit-text-stroke:0.2px #d93030">Đã hủy</div>
<div style="position:absolute;left:767.8px;top:150px;width:5px;height:1.2px;background:#272d3a;border-radius:0.6px"></div>
<div style="position:absolute;left:774.1999999999999px;top:150px;width:5px;height:1.2px;background:#272d3a;border-radius:0.6px"></div>
<div style="position:absolute;left:891.8px;top:150px;width:5px;height:1.2px;background:#272d3a;border-radius:0.6px"></div>
<div style="position:absolute;left:898.2px;top:150px;width:5px;height:1.2px;background:#272d3a;border-radius:0.6px"></div>
<div style="position:absolute;left:1098.8px;top:150px;width:5px;height:1.2px;background:#272d3a;border-radius:0.6px"></div>
<div style="position:absolute;left:1105.2px;top:150px;width:5px;height:1.2px;background:#272d3a;border-radius:0.6px"></div>
<svg style="position:absolute;left:1156px;top:142px" width="14" height="16" viewBox="0 0 14 16" fill="none"><path d="M8.5 1 H3 A1.5 1.5 0 0 0 1.5 2.5 V13.5 A1.5 1.5 0 0 0 3 15 H10.5 A1.5 1.5 0 0 0 12 13.5 V4.5 Z M8.5 1 V4.5 H12" stroke="#5855d6" stroke-width="1.1" stroke-linejoin="round"/><path d="M4 12.5 L4.5 10.5 L8.5 6.5 L10 8 L6 12 Z" stroke="#5855d6" stroke-width="1" stroke-linejoin="round"/></svg>
<div style="position:absolute;right:37px;top:140.0px;line-height:20px;font-size:14.7px;color:#5855d6;font-weight:400;white-space:nowrap;">Phát hành HĐ điều chỉnh</div>
<svg style="position:absolute;left:1354px;top:145px" width="11" height="10" viewBox="0 0 11 10" fill="none"><path d="M1 3 L5.5 7.3 L10 3" stroke="#7674e6" stroke-width="1.1" stroke-linecap="round" stroke-linejoin="round"/></svg>
<div style="position:absolute;left:0px;top:221px;width:1380px;height:1px;background:#d5d9e0"></div>
<div style="position:absolute;left:17px;top:190px;width:16px;height:16px;border:1.2px solid #8a93a6;border-radius:4px;background:#fff"></div>
<div style="position:absolute;left:-42.5px;width:400px;text-align:center;top:188.0px;line-height:20px;font-size:14.7px;color:#1f2937;font-weight:400;white-space:nowrap;">11:47 15/12/2025</div>
<svg style="position:absolute;left:273px;top:186px" width="24" height="24" viewBox="0 0 24 24" fill="none"><circle cx="12" cy="12" r="12" fill="#4fae3b"/><path d="M5.5 6.3 H7.6 L9.1 14.6 H16.6 L18 8.4 H8.2" stroke="#fff" stroke-width="1.3" stroke-linejoin="round"/><path d="M11.3 10.2 V12.6 M14.3 10.2 V12.6" stroke="#fff" stroke-width="1.2"/><circle cx="10" cy="17.3" r="1.2" stroke="#fff" stroke-width="1.1"/><circle cx="15.6" cy="17.3" r="1.2" stroke="#fff" stroke-width="1.1"/></svg>
<div style="position:absolute;left:305px;top:188.0px;line-height:20px;font-size:14.7px;color:#5855d6;font-weight:400;white-space:nowrap;letter-spacing:0.3px">ĐH000523</div>
<div style="position:absolute;right:809.7px;top:188.0px;line-height:20px;font-size:14.7px;color:#1f2937;font-weight:400;white-space:nowrap;letter-spacing:0.28px">469.950</div>
<div style="position:absolute;left:586px;top:185px;width:176px;height:25px;border-radius:8px;background:#eaf2ea;color:#34892f;font-size:14.7px;line-height:26px;padding-left:12px;white-space:nowrap;-webkit-text-stroke:0.2px #34892f">Đã bàn giao cho ĐVVC</div>
<div style="position:absolute;left:767.8px;top:198px;width:5px;height:1.2px;background:#272d3a;border-radius:0.6px"></div>
<div style="position:absolute;left:774.1999999999999px;top:198px;width:5px;height:1.2px;background:#272d3a;border-radius:0.6px"></div>
<div style="position:absolute;left:891.8px;top:198px;width:5px;height:1.2px;background:#272d3a;border-radius:0.6px"></div>
<div style="position:absolute;left:898.2px;top:198px;width:5px;height:1.2px;background:#272d3a;border-radius:0.6px"></div>
<div style="position:absolute;left:1098.8px;top:198px;width:5px;height:1.2px;background:#272d3a;border-radius:0.6px"></div>
<div style="position:absolute;left:1105.2px;top:198px;width:5px;height:1.2px;background:#272d3a;border-radius:0.6px"></div>
<svg style="position:absolute;left:1251px;top:190px" width="16" height="16" viewBox="0 0 16 16" fill="none"><path d="M14.5 1.3 L1.2 6.2 L6.8 9.2 L9.8 14.8 Z M14.5 1.3 L6.8 9.2" stroke="#5855d6" stroke-width="1" stroke-linejoin="round"/></svg>
<div style="position:absolute;right:37px;top:188.0px;line-height:20px;font-size:14.7px;color:#5855d6;font-weight:400;white-space:nowrap;">Phát hành</div>
<svg style="position:absolute;left:1354px;top:193px" width="11" height="10" viewBox="0 0 11 10" fill="none"><path d="M1 3 L5.5 7.3 L10 3" stroke="#7674e6" stroke-width="1.1" stroke-linecap="round" stroke-linejoin="round"/></svg>
<div style="position:absolute;left:0px;top:269px;width:1380px;height:1px;background:#d5d9e0"></div>
<div style="position:absolute;left:17px;top:238px;width:16px;height:16px;border:1.2px solid #8a93a6;border-radius:4px;background:#fff"></div>
<div style="position:absolute;left:-42.5px;width:400px;text-align:center;top:236.0px;line-height:20px;font-size:14.7px;color:#1f2937;font-weight:400;white-space:nowrap;">11:33 27/11/2025</div>
<svg style="position:absolute;left:273px;top:234px" width="24" height="24" viewBox="0 0 24 24" fill="none"><circle cx="12" cy="12" r="12" fill="#a04ff2"/><rect x="9.2" y="5.6" width="4.6" height="2.6" rx=".7" stroke="#fff" stroke-width="1.2"/><path d="M7.5 9.8 H16.5 L17.6 13.2 H6.4 Z" stroke="#fff" stroke-width="1.2" stroke-linejoin="round"/><rect x="6.4" y="13.2" width="11.2" height="4.4" rx="1" stroke="#fff" stroke-width="1.2"/><path d="M11 15.4 H13" stroke="#fff" stroke-width="1.2"/></svg>
<div style="position:absolute;left:305px;top:236.0px;line-height:20px;font-size:14.7px;color:#5855d6;font-weight:400;white-space:nowrap;letter-spacing:0.3px">ĐH000490</div>
<svg style="position:absolute;left:412px;top:238px" width="15" height="15" viewBox="0 0 15 15" fill="none"><path d="M7.5 1.3 L14.2 13 H0.8 Z" stroke="#2f9bd8" stroke-width="1.1" stroke-linejoin="round"/><path d="M7.5 5.5 V9" stroke="#2f9bd8" stroke-width="1.1"/><circle cx="7.5" cy="10.9" r=".6" fill="#2f9bd8"/></svg>
<div style="position:absolute;right:809.7px;top:236.0px;line-height:20px;font-size:14.7px;color:#1f2937;font-weight:400;white-space:nowrap;letter-spacing:0.28px">588.820</div>
<div style="position:absolute;left:586px;top:233px;width:121px;height:25px;border-radius:8px;background:#eaf2ea;color:#34892f;font-size:14.7px;line-height:26px;padding-left:12px;white-space:nowrap;-webkit-text-stroke:0.2px #34892f">Đã hoàn thành</div>
<div style="position:absolute;left:767.8px;top:246px;width:5px;height:1.2px;background:#272d3a;border-radius:0.6px"></div>
<div style="position:absolute;left:774.1999999999999px;top:246px;width:5px;height:1.2px;background:#272d3a;border-radius:0.6px"></div>
<div style="position:absolute;left:891.8px;top:246px;width:5px;height:1.2px;background:#272d3a;border-radius:0.6px"></div>
<div style="position:absolute;left:898.2px;top:246px;width:5px;height:1.2px;background:#272d3a;border-radius:0.6px"></div>
<div style="position:absolute;left:1098.8px;top:246px;width:5px;height:1.2px;background:#272d3a;border-radius:0.6px"></div>
<div style="position:absolute;left:1105.2px;top:246px;width:5px;height:1.2px;background:#272d3a;border-radius:0.6px"></div>
<svg style="position:absolute;left:1251px;top:238px" width="16" height="16" viewBox="0 0 16 16" fill="none"><path d="M14.5 1.3 L1.2 6.2 L6.8 9.2 L9.8 14.8 Z M14.5 1.3 L6.8 9.2" stroke="#5855d6" stroke-width="1" stroke-linejoin="round"/></svg>
<div style="position:absolute;right:37px;top:236.0px;line-height:20px;font-size:14.7px;color:#5855d6;font-weight:400;white-space:nowrap;">Phát hành</div>
<svg style="position:absolute;left:1354px;top:241px" width="11" height="10" viewBox="0 0 11 10" fill="none"><path d="M1 3 L5.5 7.3 L10 3" stroke="#7674e6" stroke-width="1.1" stroke-linecap="round" stroke-linejoin="round"/></svg>
<div style="position:absolute;left:0px;top:317px;width:1380px;height:1px;background:#d5d9e0"></div>
<div style="position:absolute;left:17px;top:286px;width:16px;height:16px;border:1.2px solid #8a93a6;border-radius:4px;background:#fff"></div>
<div style="position:absolute;left:-42.5px;width:400px;text-align:center;top:284.0px;line-height:20px;font-size:14.7px;color:#1f2937;font-weight:400;white-space:nowrap;">16:05 07/11/2025</div>
<svg style="position:absolute;left:273px;top:282px" width="24" height="24" viewBox="0 0 24 24" fill="none"><circle cx="12" cy="12" r="12" fill="#a04ff2"/><rect x="9.2" y="5.6" width="4.6" height="2.6" rx=".7" stroke="#fff" stroke-width="1.2"/><path d="M7.5 9.8 H16.5 L17.6 13.2 H6.4 Z" stroke="#fff" stroke-width="1.2" stroke-linejoin="round"/><rect x="6.4" y="13.2" width="11.2" height="4.4" rx="1" stroke="#fff" stroke-width="1.2"/><path d="M11 15.4 H13" stroke="#fff" stroke-width="1.2"/></svg>
<div style="position:absolute;left:305px;top:284.0px;line-height:20px;font-size:14.7px;color:#5855d6;font-weight:400;white-space:nowrap;letter-spacing:0.3px">ĐH000469</div>
<svg style="position:absolute;left:412px;top:286px" width="15" height="15" viewBox="0 0 15 15" fill="none"><path d="M7.5 1.3 L14.2 13 H0.8 Z" stroke="#2f9bd8" stroke-width="1.1" stroke-linejoin="round"/><path d="M7.5 5.5 V9" stroke="#2f9bd8" stroke-width="1.1"/><circle cx="7.5" cy="10.9" r=".6" fill="#2f9bd8"/></svg>
<div style="position:absolute;right:809.7px;top:284.0px;line-height:20px;font-size:14.7px;color:#1f2937;font-weight:400;white-space:nowrap;letter-spacing:0.28px">21.000</div>
<div style="position:absolute;left:586px;top:281px;width:121px;height:25px;border-radius:8px;background:#eaf2ea;color:#34892f;font-size:14.7px;line-height:26px;padding-left:12px;white-space:nowrap;-webkit-text-stroke:0.2px #34892f">Đã hoàn thành</div>
<div style="position:absolute;left:767.8px;top:294px;width:5px;height:1.2px;background:#272d3a;border-radius:0.6px"></div>
<div style="position:absolute;left:774.1999999999999px;top:294px;width:5px;height:1.2px;background:#272d3a;border-radius:0.6px"></div>
<div style="position:absolute;left:891.8px;top:294px;width:5px;height:1.2px;background:#272d3a;border-radius:0.6px"></div>
<div style="position:absolute;left:898.2px;top:294px;width:5px;height:1.2px;background:#272d3a;border-radius:0.6px"></div>
<div style="position:absolute;left:1098.8px;top:294px;width:5px;height:1.2px;background:#272d3a;border-radius:0.6px"></div>
<div style="position:absolute;left:1105.2px;top:294px;width:5px;height:1.2px;background:#272d3a;border-radius:0.6px"></div>
<svg style="position:absolute;left:1251px;top:286px" width="16" height="16" viewBox="0 0 16 16" fill="none"><path d="M14.5 1.3 L1.2 6.2 L6.8 9.2 L9.8 14.8 Z M14.5 1.3 L6.8 9.2" stroke="#5855d6" stroke-width="1" stroke-linejoin="round"/></svg>
<div style="position:absolute;right:37px;top:284.0px;line-height:20px;font-size:14.7px;color:#5855d6;font-weight:400;white-space:nowrap;">Phát hành</div>
<svg style="position:absolute;left:1354px;top:289px" width="11" height="10" viewBox="0 0 11 10" fill="none"><path d="M1 3 L5.5 7.3 L10 3" stroke="#7674e6" stroke-width="1.1" stroke-linecap="round" stroke-linejoin="round"/></svg>
<div style="position:absolute;left:0px;top:365px;width:1380px;height:1px;background:#d5d9e0"></div>
<div style="position:absolute;left:17px;top:334px;width:16px;height:16px;border:1.2px solid #8a93a6;border-radius:4px;background:#fff"></div>
<div style="position:absolute;left:-42.5px;width:400px;text-align:center;top:332.0px;line-height:20px;font-size:14.7px;color:#1f2937;font-weight:400;white-space:nowrap;">14:51 07/11/2025</div>
<svg style="position:absolute;left:273px;top:330px" width="24" height="24" viewBox="0 0 24 24" fill="none"><circle cx="12" cy="12" r="12" fill="#a04ff2"/><rect x="9.2" y="5.6" width="4.6" height="2.6" rx=".7" stroke="#fff" stroke-width="1.2"/><path d="M7.5 9.8 H16.5 L17.6 13.2 H6.4 Z" stroke="#fff" stroke-width="1.2" stroke-linejoin="round"/><rect x="6.4" y="13.2" width="11.2" height="4.4" rx="1" stroke="#fff" stroke-width="1.2"/><path d="M11 15.4 H13" stroke="#fff" stroke-width="1.2"/></svg>
<div style="position:absolute;left:305px;top:332.0px;line-height:20px;font-size:14.7px;color:#5855d6;font-weight:400;white-space:nowrap;letter-spacing:0.3px">ĐH000468</div>
<svg style="position:absolute;left:412px;top:334px" width="15" height="15" viewBox="0 0 15 15" fill="none"><path d="M7.5 1.3 L14.2 13 H0.8 Z" stroke="#2f9bd8" stroke-width="1.1" stroke-linejoin="round"/><path d="M7.5 5.5 V9" stroke="#2f9bd8" stroke-width="1.1"/><circle cx="7.5" cy="10.9" r=".6" fill="#2f9bd8"/></svg>
<div style="position:absolute;right:809.7px;top:332.0px;line-height:20px;font-size:14.7px;color:#1f2937;font-weight:400;white-space:nowrap;letter-spacing:0.28px">588.820</div>
<div style="position:absolute;left:586px;top:329px;width:121px;height:25px;border-radius:8px;background:#eaf2ea;color:#34892f;font-size:14.7px;line-height:26px;padding-left:12px;white-space:nowrap;-webkit-text-stroke:0.2px #34892f">Đã hoàn thành</div>
<div style="position:absolute;left:767.8px;top:342px;width:5px;height:1.2px;background:#272d3a;border-radius:0.6px"></div>
<div style="position:absolute;left:774.1999999999999px;top:342px;width:5px;height:1.2px;background:#272d3a;border-radius:0.6px"></div>
<div style="position:absolute;left:891.8px;top:342px;width:5px;height:1.2px;background:#272d3a;border-radius:0.6px"></div>
<div style="position:absolute;left:898.2px;top:342px;width:5px;height:1.2px;background:#272d3a;border-radius:0.6px"></div>
<div style="position:absolute;left:1098.8px;top:342px;width:5px;height:1.2px;background:#272d3a;border-radius:0.6px"></div>
<div style="position:absolute;left:1105.2px;top:342px;width:5px;height:1.2px;background:#272d3a;border-radius:0.6px"></div>
<svg style="position:absolute;left:1251px;top:334px" width="16" height="16" viewBox="0 0 16 16" fill="none"><path d="M14.5 1.3 L1.2 6.2 L6.8 9.2 L9.8 14.8 Z M14.5 1.3 L6.8 9.2" stroke="#5855d6" stroke-width="1" stroke-linejoin="round"/></svg>
<div style="position:absolute;right:37px;top:332.0px;line-height:20px;font-size:14.7px;color:#5855d6;font-weight:400;white-space:nowrap;">Phát hành</div>
<svg style="position:absolute;left:1354px;top:337px" width="11" height="10" viewBox="0 0 11 10" fill="none"><path d="M1 3 L5.5 7.3 L10 3" stroke="#7674e6" stroke-width="1.1" stroke-linecap="round" stroke-linejoin="round"/></svg>
<div style="position:absolute;left:0px;top:413px;width:1380px;height:1px;background:#d5d9e0"></div>
<div style="position:absolute;left:17px;top:382px;width:16px;height:16px;border:1.2px solid #8a93a6;border-radius:4px;background:#fff"></div>
<div style="position:absolute;left:-42.5px;width:400px;text-align:center;top:380.0px;line-height:20px;font-size:14.7px;color:#1f2937;font-weight:400;white-space:nowrap;">14:50 07/11/2025</div>
<svg style="position:absolute;left:273px;top:378px" width="24" height="24" viewBox="0 0 24 24" fill="none"><circle cx="12" cy="12" r="12" fill="#a04ff2"/><rect x="9.2" y="5.6" width="4.6" height="2.6" rx=".7" stroke="#fff" stroke-width="1.2"/><path d="M7.5 9.8 H16.5 L17.6 13.2 H6.4 Z" stroke="#fff" stroke-width="1.2" stroke-linejoin="round"/><rect x="6.4" y="13.2" width="11.2" height="4.4" rx="1" stroke="#fff" stroke-width="1.2"/><path d="M11 15.4 H13" stroke="#fff" stroke-width="1.2"/></svg>
<div style="position:absolute;left:305px;top:380.0px;line-height:20px;font-size:14.7px;color:#5855d6;font-weight:400;white-space:nowrap;letter-spacing:0.3px">ĐH000467</div>
<svg style="position:absolute;left:412px;top:382px" width="15" height="15" viewBox="0 0 15 15" fill="none"><path d="M7.5 1.3 L14.2 13 H0.8 Z" stroke="#2f9bd8" stroke-width="1.1" stroke-linejoin="round"/><path d="M7.5 5.5 V9" stroke="#2f9bd8" stroke-width="1.1"/><circle cx="7.5" cy="10.9" r=".6" fill="#2f9bd8"/></svg>
<div style="position:absolute;right:809.7px;top:380.0px;line-height:20px;font-size:14.7px;color:#1f2937;font-weight:400;white-space:nowrap;letter-spacing:0.28px">588.820</div>
<div style="position:absolute;left:586px;top:377px;width:121px;height:25px;border-radius:8px;background:#eaf2ea;color:#34892f;font-size:14.7px;line-height:26px;padding-left:12px;white-space:nowrap;-webkit-text-stroke:0.2px #34892f">Đã hoàn thành</div>
<div style="position:absolute;left:767.8px;top:390px;width:5px;height:1.2px;background:#272d3a;border-radius:0.6px"></div>
<div style="position:absolute;left:774.1999999999999px;top:390px;width:5px;height:1.2px;background:#272d3a;border-radius:0.6px"></div>
<div style="position:absolute;left:891.8px;top:390px;width:5px;height:1.2px;background:#272d3a;border-radius:0.6px"></div>
<div style="position:absolute;left:898.2px;top:390px;width:5px;height:1.2px;background:#272d3a;border-radius:0.6px"></div>
<div style="position:absolute;left:1098.8px;top:390px;width:5px;height:1.2px;background:#272d3a;border-radius:0.6px"></div>
<div style="position:absolute;left:1105.2px;top:390px;width:5px;height:1.2px;background:#272d3a;border-radius:0.6px"></div>
<svg style="position:absolute;left:1251px;top:382px" width="16" height="16" viewBox="0 0 16 16" fill="none"><path d="M14.5 1.3 L1.2 6.2 L6.8 9.2 L9.8 14.8 Z M14.5 1.3 L6.8 9.2" stroke="#5855d6" stroke-width="1" stroke-linejoin="round"/></svg>
<div style="position:absolute;right:37px;top:380.0px;line-height:20px;font-size:14.7px;color:#5855d6;font-weight:400;white-space:nowrap;">Phát hành</div>
<svg style="position:absolute;left:1354px;top:385px" width="11" height="10" viewBox="0 0 11 10" fill="none"><path d="M1 3 L5.5 7.3 L10 3" stroke="#7674e6" stroke-width="1.1" stroke-linecap="round" stroke-linejoin="round"/></svg>
<div style="position:absolute;left:0px;top:461px;width:1380px;height:1px;background:#d5d9e0"></div>
<div style="position:absolute;left:17px;top:430px;width:16px;height:16px;border:1.2px solid #8a93a6;border-radius:4px;background:#fff"></div>
<div style="position:absolute;left:-42.5px;width:400px;text-align:center;top:428.0px;line-height:20px;font-size:14.7px;color:#1f2937;font-weight:400;white-space:nowrap;">10:09 07/11/2025</div>
<svg style="position:absolute;left:273px;top:426px" width="24" height="24" viewBox="0 0 24 24" fill="none"><circle cx="12" cy="12" r="12" fill="#a04ff2"/><rect x="9.2" y="5.6" width="4.6" height="2.6" rx=".7" stroke="#fff" stroke-width="1.2"/><path d="M7.5 9.8 H16.5 L17.6 13.2 H6.4 Z" stroke="#fff" stroke-width="1.2" stroke-linejoin="round"/><rect x="6.4" y="13.2" width="11.2" height="4.4" rx="1" stroke="#fff" stroke-width="1.2"/><path d="M11 15.4 H13" stroke="#fff" stroke-width="1.2"/></svg>
<div style="position:absolute;left:305px;top:428.0px;line-height:20px;font-size:14.7px;color:#5855d6;font-weight:400;white-space:nowrap;letter-spacing:0.3px">ĐH000465</div>
<svg style="position:absolute;left:412px;top:430px" width="15" height="15" viewBox="0 0 15 15" fill="none"><path d="M7.5 1.3 L14.2 13 H0.8 Z" stroke="#2f9bd8" stroke-width="1.1" stroke-linejoin="round"/><path d="M7.5 5.5 V9" stroke="#2f9bd8" stroke-width="1.1"/><circle cx="7.5" cy="10.9" r=".6" fill="#2f9bd8"/></svg>
<div style="position:absolute;right:809.7px;top:428.0px;line-height:20px;font-size:14.7px;color:#1f2937;font-weight:400;white-space:nowrap;letter-spacing:0.28px">0</div>
<div style="position:absolute;left:586px;top:425px;width:121px;height:25px;border-radius:8px;background:#eaf2ea;color:#34892f;font-size:14.7px;line-height:26px;padding-left:12px;white-space:nowrap;-webkit-text-stroke:0.2px #34892f">Đã hoàn thành</div>
<div style="position:absolute;left:767.8px;top:438px;width:5px;height:1.2px;background:#272d3a;border-radius:0.6px"></div>
<div style="position:absolute;left:774.1999999999999px;top:438px;width:5px;height:1.2px;background:#272d3a;border-radius:0.6px"></div>
<div style="position:absolute;left:891.8px;top:438px;width:5px;height:1.2px;background:#272d3a;border-radius:0.6px"></div>
<div style="position:absolute;left:898.2px;top:438px;width:5px;height:1.2px;background:#272d3a;border-radius:0.6px"></div>
<div style="position:absolute;left:1098.8px;top:438px;width:5px;height:1.2px;background:#272d3a;border-radius:0.6px"></div>
<div style="position:absolute;left:1105.2px;top:438px;width:5px;height:1.2px;background:#272d3a;border-radius:0.6px"></div>
<svg style="position:absolute;left:1251px;top:430px" width="16" height="16" viewBox="0 0 16 16" fill="none"><path d="M14.5 1.3 L1.2 6.2 L6.8 9.2 L9.8 14.8 Z M14.5 1.3 L6.8 9.2" stroke="#5855d6" stroke-width="1" stroke-linejoin="round"/></svg>
<div style="position:absolute;right:37px;top:428.0px;line-height:20px;font-size:14.7px;color:#5855d6;font-weight:400;white-space:nowrap;">Phát hành</div>
<svg style="position:absolute;left:1354px;top:433px" width="11" height="10" viewBox="0 0 11 10" fill="none"><path d="M1 3 L5.5 7.3 L10 3" stroke="#7674e6" stroke-width="1.1" stroke-linecap="round" stroke-linejoin="round"/></svg>
<div style="position:absolute;left:0px;top:509px;width:1380px;height:1px;background:#d5d9e0"></div>
<div style="position:absolute;left:17px;top:478px;width:16px;height:16px;border:1.2px solid #8a93a6;border-radius:4px;background:#fff"></div>
<div style="position:absolute;left:-42.5px;width:400px;text-align:center;top:476.0px;line-height:20px;font-size:14.7px;color:#1f2937;font-weight:400;white-space:nowrap;">10:22 27/10/2025</div>
<svg style="position:absolute;left:273px;top:474px" width="24" height="24" viewBox="0 0 24 24" fill="none"><circle cx="12" cy="12" r="12" fill="#a04ff2"/><rect x="9.2" y="5.6" width="4.6" height="2.6" rx=".7" stroke="#fff" stroke-width="1.2"/><path d="M7.5 9.8 H16.5 L17.6 13.2 H6.4 Z" stroke="#fff" stroke-width="1.2" stroke-linejoin="round"/><rect x="6.4" y="13.2" width="11.2" height="4.4" rx="1" stroke="#fff" stroke-width="1.2"/><path d="M11 15.4 H13" stroke="#fff" stroke-width="1.2"/></svg>
<div style="position:absolute;left:305px;top:476.0px;line-height:20px;font-size:14.7px;color:#5855d6;font-weight:400;white-space:nowrap;letter-spacing:0.3px">ĐH000458</div>
<svg style="position:absolute;left:412px;top:478px" width="15" height="15" viewBox="0 0 15 15" fill="none"><path d="M7.5 1.3 L14.2 13 H0.8 Z" stroke="#2f9bd8" stroke-width="1.1" stroke-linejoin="round"/><path d="M7.5 5.5 V9" stroke="#2f9bd8" stroke-width="1.1"/><circle cx="7.5" cy="10.9" r=".6" fill="#2f9bd8"/></svg>
<div style="position:absolute;right:809.7px;top:476.0px;line-height:20px;font-size:14.7px;color:#1f2937;font-weight:400;white-space:nowrap;letter-spacing:0.28px">499.000</div>
<div style="position:absolute;left:586px;top:473px;width:121px;height:25px;border-radius:8px;background:#eaf2ea;color:#34892f;font-size:14.7px;line-height:26px;padding-left:12px;white-space:nowrap;-webkit-text-stroke:0.2px #34892f">Đã hoàn thành</div>
<div style="position:absolute;left:767.8px;top:486px;width:5px;height:1.2px;background:#272d3a;border-radius:0.6px"></div>
<div style="position:absolute;left:774.1999999999999px;top:486px;width:5px;height:1.2px;background:#272d3a;border-radius:0.6px"></div>
<div style="position:absolute;left:891.8px;top:486px;width:5px;height:1.2px;background:#272d3a;border-radius:0.6px"></div>
<div style="position:absolute;left:898.2px;top:486px;width:5px;height:1.2px;background:#272d3a;border-radius:0.6px"></div>
<div style="position:absolute;left:1098.8px;top:486px;width:5px;height:1.2px;background:#272d3a;border-radius:0.6px"></div>
<div style="position:absolute;left:1105.2px;top:486px;width:5px;height:1.2px;background:#272d3a;border-radius:0.6px"></div>
<svg style="position:absolute;left:1251px;top:478px" width="16" height="16" viewBox="0 0 16 16" fill="none"><path d="M14.5 1.3 L1.2 6.2 L6.8 9.2 L9.8 14.8 Z M14.5 1.3 L6.8 9.2" stroke="#5855d6" stroke-width="1" stroke-linejoin="round"/></svg>
<div style="position:absolute;right:37px;top:476.0px;line-height:20px;font-size:14.7px;color:#5855d6;font-weight:400;white-space:nowrap;">Phát hành</div>
<svg style="position:absolute;left:1354px;top:481px" width="11" height="10" viewBox="0 0 11 10" fill="none"><path d="M1 3 L5.5 7.3 L10 3" stroke="#7674e6" stroke-width="1.1" stroke-linecap="round" stroke-linejoin="round"/></svg>
<div style="position:absolute;left:0px;top:557px;width:1380px;height:1px;background:#d5d9e0"></div>
<div style="position:absolute;left:17px;top:526px;width:16px;height:16px;border:1.2px solid #8a93a6;border-radius:4px;background:#fff"></div>
<div style="position:absolute;left:-42.5px;width:400px;text-align:center;top:524.0px;line-height:20px;font-size:14.7px;color:#1f2937;font-weight:400;white-space:nowrap;">11:21 22/10/2025</div>
<svg style="position:absolute;left:273px;top:522px" width="24" height="24" viewBox="0 0 24 24" fill="none"><circle cx="12" cy="12" r="12" fill="#a04ff2"/><rect x="9.2" y="5.6" width="4.6" height="2.6" rx=".7" stroke="#fff" stroke-width="1.2"/><path d="M7.5 9.8 H16.5 L17.6 13.2 H6.4 Z" stroke="#fff" stroke-width="1.2" stroke-linejoin="round"/><rect x="6.4" y="13.2" width="11.2" height="4.4" rx="1" stroke="#fff" stroke-width="1.2"/><path d="M11 15.4 H13" stroke="#fff" stroke-width="1.2"/></svg>
<div style="position:absolute;left:305px;top:524.0px;line-height:20px;font-size:14.7px;color:#5855d6;font-weight:400;white-space:nowrap;letter-spacing:0.3px">ĐH000457</div>
<svg style="position:absolute;left:412px;top:526px" width="15" height="15" viewBox="0 0 15 15" fill="none"><path d="M7.5 1.3 L14.2 13 H0.8 Z" stroke="#2f9bd8" stroke-width="1.1" stroke-linejoin="round"/><path d="M7.5 5.5 V9" stroke="#2f9bd8" stroke-width="1.1"/><circle cx="7.5" cy="10.9" r=".6" fill="#2f9bd8"/></svg>
<div style="position:absolute;right:809.7px;top:524.0px;line-height:20px;font-size:14.7px;color:#1f2937;font-weight:400;white-space:nowrap;letter-spacing:0.28px">455.000</div>
<div style="position:absolute;left:586px;top:521px;width:121px;height:25px;border-radius:8px;background:#eaf2ea;color:#34892f;font-size:14.7px;line-height:26px;padding-left:12px;white-space:nowrap;-webkit-text-stroke:0.2px #34892f">Đã hoàn thành</div>
<div style="position:absolute;left:767.8px;top:534px;width:5px;height:1.2px;background:#272d3a;border-radius:0.6px"></div>
<div style="position:absolute;left:774.1999999999999px;top:534px;width:5px;height:1.2px;background:#272d3a;border-radius:0.6px"></div>
<div style="position:absolute;left:891.8px;top:534px;width:5px;height:1.2px;background:#272d3a;border-radius:0.6px"></div>
<div style="position:absolute;left:898.2px;top:534px;width:5px;height:1.2px;background:#272d3a;border-radius:0.6px"></div>
<div style="position:absolute;left:1098.8px;top:534px;width:5px;height:1.2px;background:#272d3a;border-radius:0.6px"></div>
<div style="position:absolute;left:1105.2px;top:534px;width:5px;height:1.2px;background:#272d3a;border-radius:0.6px"></div>
<svg style="position:absolute;left:1251px;top:526px" width="16" height="16" viewBox="0 0 16 16" fill="none"><path d="M14.5 1.3 L1.2 6.2 L6.8 9.2 L9.8 14.8 Z M14.5 1.3 L6.8 9.2" stroke="#5855d6" stroke-width="1" stroke-linejoin="round"/></svg>
<div style="position:absolute;right:37px;top:524.0px;line-height:20px;font-size:14.7px;color:#5855d6;font-weight:400;white-space:nowrap;">Phát hành</div>
<svg style="position:absolute;left:1354px;top:529px" width="11" height="10" viewBox="0 0 11 10" fill="none"><path d="M1 3 L5.5 7.3 L10 3" stroke="#7674e6" stroke-width="1.1" stroke-linecap="round" stroke-linejoin="round"/></svg>
<div style="position:absolute;left:17px;top:574px;width:16px;height:16px;border:1.2px solid #8a93a6;border-radius:4px;background:#fff"></div>
<div style="position:absolute;left:-42.5px;width:400px;text-align:center;top:572.0px;line-height:20px;font-size:14.7px;color:#1f2937;font-weight:400;white-space:nowrap;">11:03 03/10/2025</div>
<svg style="position:absolute;left:273px;top:570px" width="24" height="24" viewBox="0 0 24 24" fill="none"><circle cx="12" cy="12" r="12" fill="#a04ff2"/><rect x="9.2" y="5.6" width="4.6" height="2.6" rx=".7" stroke="#fff" stroke-width="1.2"/><path d="M7.5 9.8 H16.5 L17.6 13.2 H6.4 Z" stroke="#fff" stroke-width="1.2" stroke-linejoin="round"/><rect x="6.4" y="13.2" width="11.2" height="4.4" rx="1" stroke="#fff" stroke-width="1.2"/><path d="M11 15.4 H13" stroke="#fff" stroke-width="1.2"/></svg>
<div style="position:absolute;left:305px;top:572.0px;line-height:20px;font-size:14.7px;color:#5855d6;font-weight:400;white-space:nowrap;letter-spacing:0.3px">ĐH000453</div>
<svg style="position:absolute;left:412px;top:574px" width="15" height="15" viewBox="0 0 15 15" fill="none"><path d="M7.5 1.3 L14.2 13 H0.8 Z" stroke="#2f9bd8" stroke-width="1.1" stroke-linejoin="round"/><path d="M7.5 5.5 V9" stroke="#2f9bd8" stroke-width="1.1"/><circle cx="7.5" cy="10.9" r=".6" fill="#2f9bd8"/></svg>
<div style="position:absolute;right:809.7px;top:572.0px;line-height:20px;font-size:14.7px;color:#1f2937;font-weight:400;white-space:nowrap;letter-spacing:0.28px">455.000</div>
<div style="position:absolute;left:586px;top:569px;width:121px;height:25px;border-radius:8px;background:#eaf2ea;color:#34892f;font-size:14.7px;line-height:26px;padding-left:12px;white-space:nowrap;-webkit-text-stroke:0.2px #34892f">Đã hoàn thành</div>
<div style="position:absolute;left:767.8px;top:582px;width:5px;height:1.2px;background:#272d3a;border-radius:0.6px"></div>
<div style="position:absolute;left:774.1999999999999px;top:582px;width:5px;height:1.2px;background:#272d3a;border-radius:0.6px"></div>
<div style="position:absolute;left:891.8px;top:582px;width:5px;height:1.2px;background:#272d3a;border-radius:0.6px"></div>
<div style="position:absolute;left:898.2px;top:582px;width:5px;height:1.2px;background:#272d3a;border-radius:0.6px"></div>
<div style="position:absolute;left:1098.8px;top:582px;width:5px;height:1.2px;background:#272d3a;border-radius:0.6px"></div>
<div style="position:absolute;left:1105.2px;top:582px;width:5px;height:1.2px;background:#272d3a;border-radius:0.6px"></div>
<svg style="position:absolute;left:1251px;top:574px" width="16" height="16" viewBox="0 0 16 16" fill="none"><path d="M14.5 1.3 L1.2 6.2 L6.8 9.2 L9.8 14.8 Z M14.5 1.3 L6.8 9.2" stroke="#5855d6" stroke-width="1" stroke-linejoin="round"/></svg>
<div style="position:absolute;right:37px;top:572.0px;line-height:20px;font-size:14.7px;color:#5855d6;font-weight:400;white-space:nowrap;">Phát hành</div>
<svg style="position:absolute;left:1354px;top:577px" width="11" height="10" viewBox="0 0 11 10" fill="none"><path d="M1 3 L5.5 7.3 L10 3" stroke="#7674e6" stroke-width="1.1" stroke-linecap="round" stroke-linejoin="round"/></svg>
<div style="position:absolute;left:0px;top:0px;width:1380px;height:34px;background:#e5e7eb;border-bottom:1px solid #cfd3da"></div>
<div style="position:absolute;left:17px;top:9px;width:16px;height:16px;border:1.2px solid #8a93a6;border-radius:4px;background:#fff"></div>
<div style="position:absolute;left:49px;top:6px;width:1px;height:22px;background:#cfd3da"></div>
<div style="position:absolute;left:265px;top:6px;width:1px;height:22px;background:#cfd3da"></div>
<div style="position:absolute;left:435px;top:6px;width:1px;height:22px;background:#cfd3da"></div>
<div style="position:absolute;left:578px;top:6px;width:1px;height:22px;background:#cfd3da"></div>
<div style="position:absolute;left:758px;top:6px;width:1px;height:22px;background:#cfd3da"></div>
<div style="position:absolute;left:882px;top:6px;width:1px;height:22px;background:#cfd3da"></div>
<div style="position:absolute;left:1090px;top:6px;width:1px;height:22px;background:#cfd3da"></div>
<div style="position:absolute;left:1160px;top:6px;width:1px;height:22px;background:#cfd3da"></div>
<div style="position:absolute;left:57px;top:7.699999999999989px;line-height:20px;font-size:14px;color:#111827;font-weight:700;white-space:nowrap;letter-spacing:0.12px">Ngày phát hành đề xuất</div>
<div style="position:absolute;left:273px;top:7.699999999999989px;line-height:20px;font-size:14px;color:#111827;font-weight:700;white-space:nowrap;letter-spacing:0.12px">Mã đơn MISA eShop</div>
<div style="position:absolute;left:444px;top:7.699999999999989px;line-height:20px;font-size:14px;color:#111827;font-weight:700;white-space:nowrap;letter-spacing:0.12px">Tổng thanh toán</div>
<div style="position:absolute;left:586px;top:7.699999999999989px;line-height:20px;font-size:14px;color:#111827;font-weight:700;white-space:nowrap;letter-spacing:0.12px">Trạng thái phát hành</div>
<div style="position:absolute;left:767px;top:7.699999999999989px;line-height:20px;font-size:14px;color:#111827;font-weight:700;white-space:nowrap;letter-spacing:0.12px">Mã số thuế</div>
<div style="position:absolute;left:891px;top:7.699999999999989px;line-height:20px;font-size:14px;color:#111827;font-weight:700;white-space:nowrap;letter-spacing:0.12px">Tên đơn vị</div>
<div style="position:absolute;left:1098px;top:7.699999999999989px;line-height:20px;font-size:14px;color:#111827;font-weight:700;white-space:nowrap;letter-spacing:0.12px">Địa chỉ</div>
<div style="position:absolute;right:36px;top:7.699999999999989px;line-height:20px;font-size:14px;color:#111827;font-weight:700;white-space:nowrap;letter-spacing:0.12px">Chức năng</div>
<svg style="position:absolute;left:242px;top:7px" width="14" height="14" viewBox="0 0 14 14" fill="none"><circle cx="7" cy="7" r="6.1" stroke="#7576ec" stroke-width="1"/><path d="M6.8 6.3 L7.2 9.8" stroke="#7576ec" stroke-width="1"/><circle cx="6.8" cy="4.5" r=".6" fill="#7576ec"/></svg>
</div>
<div style="position:absolute;left:1615px;top:193px;width:6px;height:146px;background:#9aa1ad;border-radius:3px"></div>
<div style="position:absolute;left:232px;top:745px;width:1380px;height:33px;background:#e5e7eb;border-bottom:1px solid #cfd3da"></div>
<div style="position:absolute;right:845.4px;top:751.0px;line-height:20px;font-size:14.5px;color:#111827;font-weight:700;white-space:nowrap;text-align:right;letter-spacing:0.6px">78.370.805</div>
<div style="position:absolute;left:235px;top:782px;width:512px;height:5px;background:#9aa1ad;border-radius:3px"></div>
<div style="position:absolute;left:232.3px;top:801.0px;line-height:20px;font-size:14.7px;color:#1f2937;font-weight:400;white-space:nowrap;">Tổng số:</div>
<div style="position:absolute;left:301px;top:802.0px;line-height:20px;font-size:13.8px;color:#111827;font-weight:700;white-space:nowrap;letter-spacing:-0.5px">161</div>
<div style="position:absolute;left:1205px;top:801.0px;line-height:20px;font-size:14.7px;color:#1f2937;font-weight:400;white-space:nowrap;">Số bản ghi trên trang</div>
<div style="position:absolute;left:1360px;top:793px;width:75px;height:34px;border:1px solid #d4d7de;border-radius:8px;background:#fff"></div>
<div style="position:absolute;left:1376px;top:801.0px;line-height:20px;font-size:14.7px;color:#1f2937;font-weight:400;white-space:nowrap;">50</div>
<svg style="position:absolute;left:1409px;top:805px;" width="12" height="10" viewBox="0 0 12 10" fill="none"><path d="M2 3.2 L6.6 8.2 L11.2 3.2" stroke="#3b4250" stroke-width="1" stroke-linecap="round" stroke-linejoin="round"/></svg>
<div style="position:absolute;left:1450.2px;top:801.0px;line-height:20px;font-size:14.7px;color:#1f2937;font-weight:400;white-space:nowrap;">1 - 4</div>
<svg style="position:absolute;left:1504px;top:804px;" width="14" height="14" viewBox="0 0 14 14" fill="none"><path d="M2.5 2.2 V10.8 M10.3 2.2 L6 6.5 L10.3 10.8" stroke="#5b6270" stroke-width="1" stroke-linecap="round" stroke-linejoin="round"/></svg>
<svg style="position:absolute;left:1536px;top:804px;" width="14" height="14" viewBox="0 0 14 14" fill="none"><path d="M8.8 2.2 L4.5 6.5 L8.8 10.8" stroke="#5b6270" stroke-width="1" stroke-linecap="round" stroke-linejoin="round"/></svg>
<svg style="position:absolute;left:1568px;top:804px;" width="14" height="14" viewBox="0 0 14 14" fill="none"><path d="M5.2 2.2 L9.5 6.5 L5.2 10.8" stroke="#5b6270" stroke-width="1" stroke-linecap="round" stroke-linejoin="round"/></svg>
<svg style="position:absolute;left:1600px;top:804px;" width="14" height="14" viewBox="0 0 14 14" fill="none"><path d="M3.7 2.2 L8 6.5 L3.7 10.8 M11.5 2.2 V10.8" stroke="#5b6270" stroke-width="1" stroke-linecap="round" stroke-linejoin="round"/></svg>
<div style="position:absolute;left:1632px;top:686px;width:20px;height:32px;border-radius:4px 0 0 4px;background:#0a72e6"></div>
<svg style="position:absolute;left:1633px;top:695px;" width="10" height="14" viewBox="0 0 10 14" fill="none"><path d="M7.5 3 L3 7 L7.5 11" stroke="#fff" stroke-width="2.2" stroke-linecap="round" stroke-linejoin="round"/></svg>
</body></html>
